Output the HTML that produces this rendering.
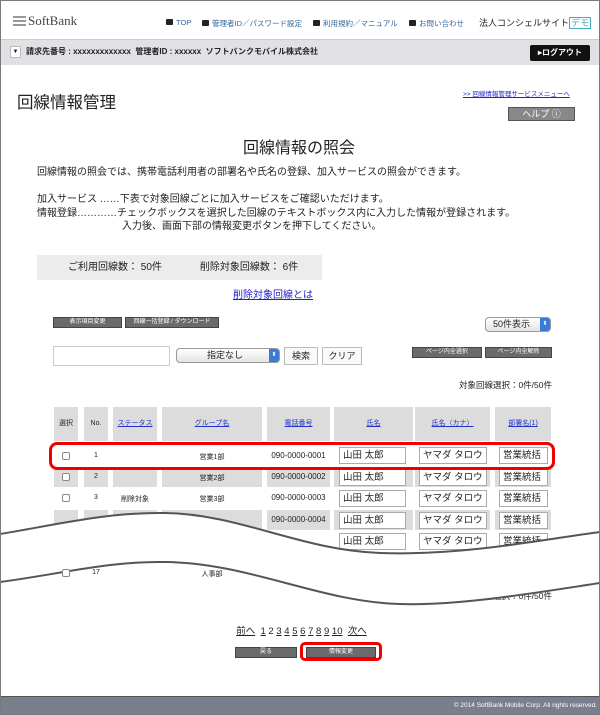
<!DOCTYPE html>
<html><head><meta charset="utf-8"><style>
*{margin:0;padding:0;box-sizing:border-box}
body{width:600px;height:715px;position:relative;overflow:hidden;background:#fff;font-family:"Liberation Sans","Noto Sans CJK JP",sans-serif;color:#222}
.a{position:absolute;white-space:nowrap}
.frame{position:absolute;left:0;top:0;width:600px;height:715px;border:1px solid #7a7a7a;z-index:50;pointer-events:none}
.nav{font-size:7.5px;color:#336699}
.nb{display:inline-block;width:7px;height:6px;background:#222;border-radius:1px;margin-right:3px;vertical-align:0}
.db{position:absolute;background:#6b6b6b;border:1px solid #444;color:#fff;font-size:6px;text-align:center;line-height:9px}
.th{position:absolute;background:#dcdcdc;font-size:7px;text-align:center;top:407px;height:34px;line-height:34px}
.th u{color:#2233cc}
.cell{position:absolute;font-size:7px;text-align:center}
.gr{position:absolute;background:#dcdcdc}
.in{position:absolute;background:#fff;border:1px solid #aaa;font-size:9.5px;line-height:15px;padding-left:3px;overflow:hidden;height:17px}
.cb{position:absolute;width:8px;height:8px;border:1px solid #888;border-radius:2px;background:#fff}
</style></head><body>
<div class="frame"></div>
<div class="a" style="left:13px;top:16px;width:13px;height:2px;background:#999"></div>
<div class="a" style="left:13px;top:20px;width:13px;height:2px;background:#999"></div>
<div class="a" style="left:13px;top:24px;width:13px;height:2px;background:#999"></div>
<div class="a" style="left:28px;top:13px;font-family:'Liberation Serif',serif;font-size:13px;color:#444">SoftBank</div>
<div class="a nav" style="left:166px;top:18px"><span class="nb"></span>TOP</div>
<div class="a nav" style="left:202px;top:18px"><span class="nb"></span>管理者ID／パスワード設定</div>
<div class="a nav" style="left:313px;top:18px"><span class="nb"></span>利用規約／マニュアル</div>
<div class="a nav" style="left:409px;top:18px"><span class="nb"></span>お問い合わせ</div>
<div class="a" style="left:479px;top:16px;font-size:9px;color:#222">法人コンシェルサイト<span style="border:1px solid #4ab;color:#4ab;padding:0 1px">デモ</span></div>
<div class="a" style="left:1px;top:39px;width:598px;height:26px;background:#e1e1e5;border-top:1px solid #ccc"></div>
<div class="a" style="left:10px;top:46px;width:11px;height:12px;background:#fff;border:1px solid #bbb;font-size:6px;text-align:center;line-height:10px">▼</div>
<div class="a" style="left:26px;top:46px;font-size:8px;font-weight:bold">請求先番号 : xxxxxxxxxxxxx&nbsp; 管理者ID : xxxxxx&nbsp; ソフトバンクモバイル株式会社</div>
<div class="a" style="left:530px;top:45px;width:60px;height:16px;background:#111;border-radius:2px;color:#fff;font-size:8px;font-weight:bold;text-align:center;line-height:16px">▸ログアウト</div>
<div class="a" style="left:17px;top:89px;font-size:16.5px;color:#222">回線情報管理</div>
<div class="a" style="left:463px;top:88px;font-size:6.5px;color:#22c;text-decoration:underline">&gt;&gt; 回線情報管理サービスメニューへ</div>
<div class="a" style="left:508px;top:107px;width:67px;height:14px;background:#888;border:1px solid #555;color:#fff;font-size:9px;text-align:center;line-height:12px">ヘルプ ⓘ</div>
<div class="a" style="left:0;width:600px;top:134px;text-align:center;font-size:16px"><span style="margin-left:-2px">回線情報の照会</span></div>
<div class="a" style="left:37px;top:166px;font-size:10px;line-height:13.5px">回線情報の照会では、携帯電話利用者の部署名や氏名の登録、加入サービスの照会ができます。</div>
<div class="a" style="left:37px;top:193px;font-size:10px;line-height:13.5px">加入サービス ……下表で対象回線ごとに加入サービスをご確認いただけます。<br>情報登録…………チェックボックスを選択した回線のテキストボックス内に入力した情報が登録されます。<br><span style="padding-left:85px">入力後、画面下部の情報変更ボタンを押下してください。</span></div>
<div class="a" style="left:37px;top:255px;width:285px;height:25px;background:#ececec;font-size:10px;line-height:25px;padding-left:31px">ご利用回線数： 50件<span style="margin-left:38px">削除対象回線数： 6件</span></div>
<div class="a" style="left:233px;top:286px;font-size:10px;color:#22c;text-decoration:underline">削除対象回線とは</div>
<div class="db" style="left:53px;top:317px;width:69px;height:11px">表示項目変更</div>
<div class="db" style="left:125px;top:317px;width:94px;height:11px">回線一括登録 / ダウンロード</div>
<div class="a" style="left:485px;top:317px;width:66px;height:15px;border:1px solid #999;border-radius:4px;background:linear-gradient(#fff,#e4e4e4);font-size:9px;line-height:13px;padding-left:7px">50件表示<span style="position:absolute;right:0;top:0;width:10px;height:13px;background:#3a7bd5;color:#fff;font-size:6px;text-align:center;line-height:13px;border-radius:0 3px 3px 0">⬍</span></div>
<div class="a" style="left:53px;top:346px;width:117px;height:20px;border:1px solid #ccc"></div>
<div class="a" style="left:176px;top:348px;width:104px;height:15px;border:1px solid #999;border-radius:4px;background:linear-gradient(#fff,#e4e4e4);font-size:9px;line-height:13px;padding-left:30px">指定なし<span style="position:absolute;right:0;top:0;width:10px;height:13px;background:#3a7bd5;color:#fff;font-size:6px;text-align:center;line-height:13px;border-radius:0 3px 3px 0">⬍</span></div>
<div class="a" style="left:284px;top:347px;width:34px;height:18px;border:1px solid #bbb;background:#fafafa;font-size:9px;text-align:center;line-height:16px">検索</div>
<div class="a" style="left:322px;top:347px;width:40px;height:18px;border:1px solid #bbb;background:#fafafa;font-size:9px;text-align:center;line-height:16px">クリア</div>
<div class="db" style="left:412px;top:347px;width:70px;height:11px">ページ内全選択</div>
<div class="db" style="left:485px;top:347px;width:67px;height:11px">ページ内全解除</div>
<div class="a" style="left:400px;width:152px;top:379px;text-align:right;font-size:8.5px">対象回線選択：0件/50件</div>
<div class="th" style="left:54px;width:24px">選択</div>
<div class="th" style="left:84px;width:24px">No.</div>
<div class="th" style="left:113px;width:44px"><u>ステータス</u></div>
<div class="th" style="left:162px;width:100px"><u>グループ名</u></div>
<div class="th" style="left:267px;width:63px"><u>電話番号</u></div>
<div class="th" style="left:334px;width:79px"><u>氏名</u></div>
<div class="th" style="left:415px;width:75px"><u>氏名（カナ）</u></div>
<div class="th" style="left:495px;width:56px"><u>部署名(1)</u></div>
<div class="gr" style="left:54px;width:24px;top:467px;height:20px"></div>
<div class="gr" style="left:84px;width:24px;top:467px;height:20px"></div>
<div class="gr" style="left:113px;width:44px;top:467px;height:20px"></div>
<div class="gr" style="left:162px;width:100px;top:467px;height:20px"></div>
<div class="gr" style="left:267px;width:63px;top:467px;height:20px"></div>
<div class="gr" style="left:334px;width:79px;top:467px;height:20px"></div>
<div class="gr" style="left:415px;width:75px;top:467px;height:20px"></div>
<div class="gr" style="left:495px;width:56px;top:467px;height:20px"></div>
<div class="gr" style="left:54px;width:24px;top:510px;height:20px"></div>
<div class="gr" style="left:84px;width:24px;top:510px;height:20px"></div>
<div class="gr" style="left:113px;width:44px;top:510px;height:20px"></div>
<div class="gr" style="left:162px;width:100px;top:510px;height:20px"></div>
<div class="gr" style="left:267px;width:63px;top:510px;height:20px"></div>
<div class="gr" style="left:334px;width:79px;top:510px;height:20px"></div>
<div class="gr" style="left:415px;width:75px;top:510px;height:20px"></div>
<div class="gr" style="left:495px;width:56px;top:510px;height:20px"></div>
<div class="cb" style="left:62px;top:452px"></div><div class="cell" style="left:84px;width:24px;top:452px">1</div>
<div class="cell" style="left:162px;width:100px;top:452px">営業1部</div><div class="cell" style="left:267px;width:63px;top:451px;font-size:8px">090-0000-0001</div>
<div class="in" style="left:339px;top:447px;width:67px">山田 太郎</div><div class="in" style="left:419px;top:447px;width:68px">ヤマダ タロウ</div><div class="in" style="left:499px;top:447px;width:49px">営業統括本部</div>
<div class="cb" style="left:62px;top:473px"></div><div class="cell" style="left:84px;width:24px;top:473px">2</div>
<div class="cell" style="left:162px;width:100px;top:473px">営業2部</div><div class="cell" style="left:267px;width:63px;top:472px;font-size:8px">090-0000-0002</div>
<div class="in" style="left:339px;top:469px;width:67px">山田 太郎</div><div class="in" style="left:419px;top:469px;width:68px">ヤマダ タロウ</div><div class="in" style="left:499px;top:469px;width:49px">営業統括本部</div>
<div class="cb" style="left:62px;top:494px"></div><div class="cell" style="left:84px;width:24px;top:494px">3</div>
<div class="cell" style="left:113px;width:44px;top:494px">削除対象</div>
<div class="cell" style="left:162px;width:100px;top:494px">営業3部</div><div class="cell" style="left:267px;width:63px;top:493px;font-size:8px">090-0000-0003</div>
<div class="in" style="left:339px;top:490px;width:67px">山田 太郎</div><div class="in" style="left:419px;top:490px;width:68px">ヤマダ タロウ</div><div class="in" style="left:499px;top:490px;width:49px">営業統括本部</div>
<div class="cell" style="left:267px;width:63px;top:515px;font-size:8px">090-0000-0004</div>
<div class="in" style="left:339px;top:512px;width:67px">山田 太郎</div><div class="in" style="left:419px;top:512px;width:68px">ヤマダ タロウ</div><div class="in" style="left:499px;top:512px;width:49px">営業統括本部</div>
<div class="in" style="left:339px;top:533px;width:67px">山田 太郎</div><div class="in" style="left:419px;top:533px;width:68px">ヤマダ タロウ</div><div class="in" style="left:499px;top:533px;width:49px">営業統括本部</div>
<div class="a" style="left:400px;width:152px;top:590px;text-align:right;font-size:8.5px">対象回線選択：0件/50件</div>
<svg class="a" style="left:0;top:0;z-index:5" width="600" height="715">
<path d="M0 534 C60 524 110 512 165 513 C240 514 300 550 380 553 C460 556 540 540 600 532 L600 583 C540 592 460 606 400 604 C320 602 250 563 165 562 C110 561 60 574 0 582 Z" fill="#fff"/>
<path d="M0 534 C60 524 110 512 165 513 C240 514 300 550 380 553 C460 556 540 540 600 532" fill="none" stroke="#555" stroke-width="2"/>
<path d="M0 582 C60 574 110 561 165 562 C250 563 320 602 400 604 C460 606 540 592 600 583" fill="none" stroke="#555" stroke-width="2"/>
</svg>
<div class="cb" style="left:62px;top:569px;z-index:6"></div>
<div class="cell" style="left:84px;width:24px;top:569px;z-index:6">17</div>
<div class="cell" style="left:162px;width:100px;top:569px;z-index:6">人事部</div>
<div class="a" style="left:49px;top:442px;width:506px;height:28px;border:3px solid #e00;border-radius:8px;z-index:7"></div>
<div class="a" style="left:0;width:600px;top:623px;text-align:center;font-size:9.5px;z-index:8"><span style="margin-left:3px"><u>前へ</u>&nbsp; <u>1</u> 2 <u>3</u> <u>4</u> <u>5</u> <u>6</u> <u>7</u> <u>8</u> <u>9</u> <u>10</u>&nbsp; <u>次へ</u></span></div>
<div class="db" style="left:235px;top:647px;width:62px;height:11px;z-index:8">戻る</div>
<div class="db" style="left:306px;top:647px;width:70px;height:11px;z-index:8">情報変更</div>
<div class="a" style="left:300px;top:642px;width:82px;height:19px;border:3px solid #e00;border-radius:5px;z-index:9"></div>
<div class="a" style="left:0;top:696px;width:600px;height:19px;background:#7b7e8c;border-top:1px solid #555;color:#fff;font-size:6.5px;text-align:right;line-height:17px;padding-right:3px">© 2014 SoftBank Mobile Corp. All rights reserved.</div>
</body></html>
